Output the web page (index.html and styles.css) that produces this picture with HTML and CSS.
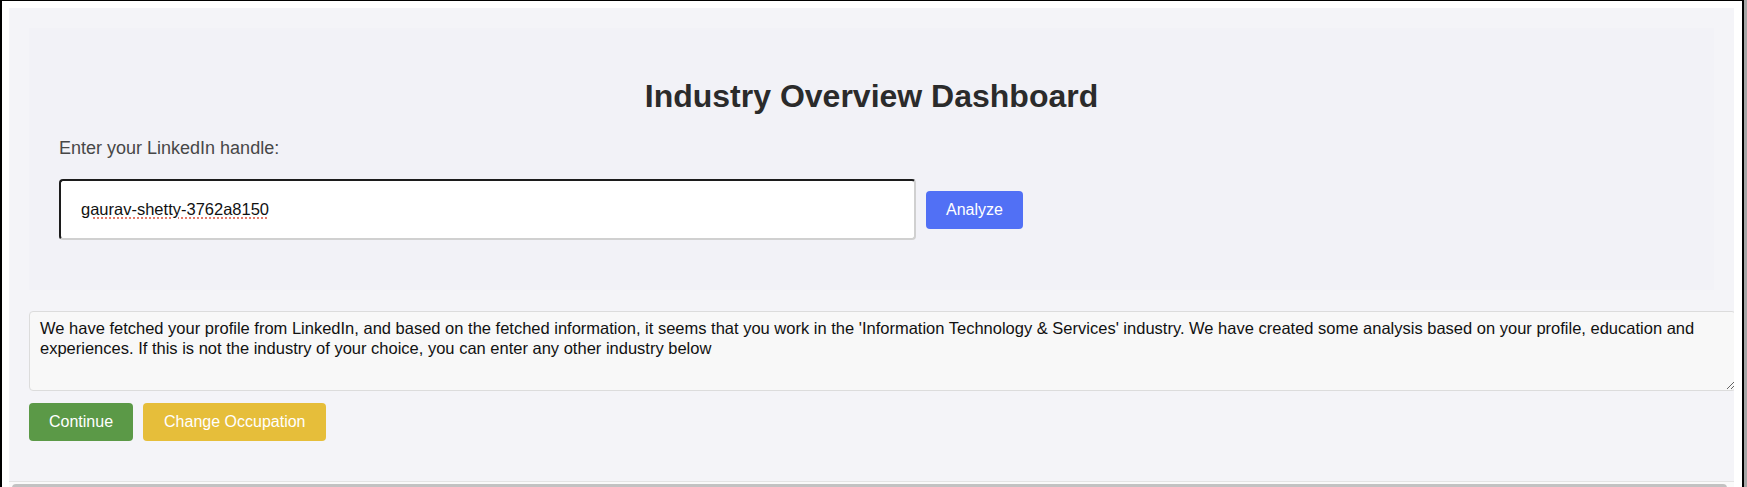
FILE: index.html
```html
<!DOCTYPE html>
<html lang="en">
<head>
<meta charset="utf-8">
<title>Industry Overview Dashboard</title>
<link rel="stylesheet" href="styles.css">
</head>
<body>
<div class="window">
  <div class="page">
    <section class="hero">
      <h1 class="title">Industry Overview Dashboard</h1>
      <label class="field-label" for="handle">Enter your LinkedIn handle:</label>
      <div class="search-row">
        <input id="handle" class="handle-input" type="text" value="gaurav-shetty-3762a8150">
        <button class="btn btn-analyze" type="button">Analyze</button>
      </div>
    </section>
    <textarea class="result" readonly>We have fetched your profile from LinkedIn, and based on the fetched information, it seems that you work in the 'Information Technology &amp; Services' industry. We have created some analysis based on your profile, education and experiences. If this is not the industry of your choice, you can enter any other industry below</textarea>
    <div class="actions">
      <button class="btn btn-continue" type="button">Continue</button>
      <button class="btn btn-change" type="button">Change Occupation</button>
    </div>
  </div>
  <div class="hscroll"><div class="hscroll-thumb"></div></div>
</div>
</body>
</html>
```
FILE: styles.css
```css
html {
  background: #a6a6a6;
}

body {
  margin: 0;
  font-family: "Liberation Sans", Arial, sans-serif;
}

.window {
  width: 1744px;
  height: 487px;
  box-sizing: border-box;
  border-top: 1px solid #000;
  border-left: 2px solid #000;
  border-right: 2px solid #000;
  background: #fff;
  padding: 7px 8px 0 7px;
  overflow: hidden;
}

.page {
  height: 473px;
  box-sizing: border-box;
  padding: 20px;
  background: #f4f4f8;
  overflow: hidden;
}

.hscroll {
  border-top: 1px solid #e4e4e4;
  background: #fafafa;
  padding: 2px 7px 4px 3px;
}

.hscroll-thumb {
  height: 8px;
  border-radius: 4px;
  background: #c2c2c2;
}

.hero {
  background: #f2f2f7;
  padding: 50px 30px;
  display: flex;
  flex-direction: column;
}

.title {
  margin: 0;
  font-size: 32px;
  line-height: 37px;
  font-weight: bold;
  color: #2b2b2b;
  text-align: center;
}

.field-label {
  margin-top: 23px;
  font-size: 18px;
  line-height: 21px;
  color: #474747;
}

.search-row {
  margin-top: 20px;
  display: flex;
  align-items: center;
  gap: 10px;
}

.handle-input {
  width: 857px;
  height: 61px;
  box-sizing: border-box;
  border-width: 2px;
  border-style: solid;
  border-color: #1c1c1c #d0d0d0 #d0d0d0 #1c1c1c;
  border-radius: 4px;
  padding: 0 20px;
  background: #fff;
  font-family: "Liberation Sans", Arial, sans-serif;
  font-size: 16.5px;
  color: #111;
  text-decoration: underline dotted #e0604c;
  text-underline-offset: 3px;
  outline: none;
}

.btn {
  height: 38px;
  padding: 0 20px;
  border: none;
  border-radius: 4px;
  font-family: "Liberation Sans", Arial, sans-serif;
  font-size: 16px;
  color: #fff;
  cursor: pointer;
}

.btn-analyze {
  background: #5170f5;
}

.btn-continue {
  background: #5b9947;
}

.btn-change {
  padding: 0 21px;
  background: #e6be3a;
}

.result {
  display: block;
  margin-top: 21px;
  width: 100%;
  height: 66px;
  box-sizing: content-box;
  padding: 6px 10px;
  border: 1px solid #dcdcdc;
  border-radius: 4px;
  background: #f8f8f8;
  font-family: "Liberation Sans", Arial, sans-serif;
  font-size: 16.5px;
  line-height: 20px;
  color: #111;
}

.actions {
  margin-top: 12px;
  display: flex;
  gap: 10px;
}
```
